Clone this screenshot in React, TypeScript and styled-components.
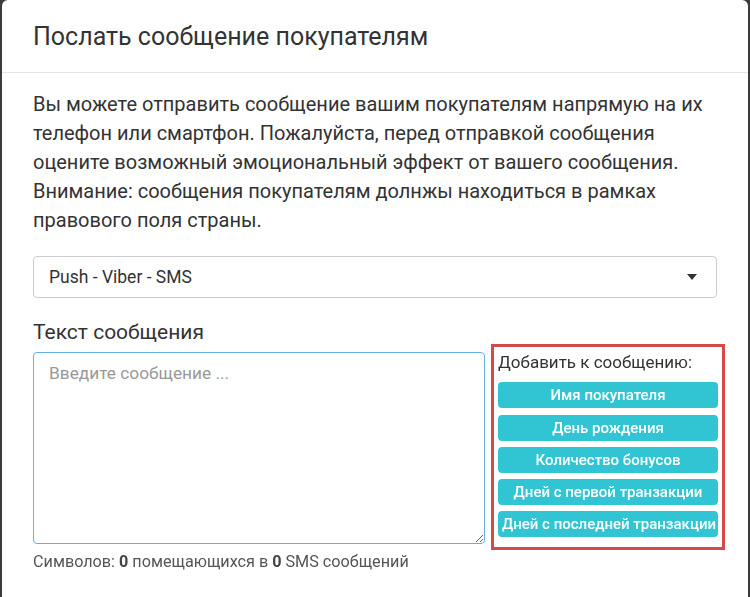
import { createGlobalStyle, styled } from "styled-components"

const Global = createGlobalStyle`
  html, body {
    margin: 0;
    padding: 0;
    background: #3b3b3b;
    font-family: Roboto, "Liberation Sans", sans-serif;
    color: #333;
  }
  * { box-sizing: border-box; }
`

const Backdrop = styled.div`
  padding: 0 2px;
  height: 597px;
  overflow: hidden;
`

const Modal = styled.div`
  background: #fff;
  border-radius: 6px 6px 0 0;
  min-height: 620px;
`

const Header = styled.div`
  padding: 21px 31px 20px;
  border-bottom: 1px solid #e5e5e5;
`

const Title = styled.h4`
  margin: 0;
  font-size: 25px;
  font-weight: 400;
  line-height: 31px;
  color: #333;
`

const Body = styled.div`
  padding: 17px 31px;
`

const Intro = styled.p`
  margin: 0 0 21px;
  font-size: 20px;
  line-height: 29px;
  color: #333;
`

const SelectBox = styled.div`
  height: 42px;
  border: 1px solid #ccc;
  border-radius: 4px;
  display: flex;
  align-items: center;
  padding: 0 15px;
  font-size: 17.5px;
  color: #333;
`

const Caret = styled.span`
  margin-left: auto;
  width: 0;
  height: 0;
  border-left: 5px solid transparent;
  border-right: 5px solid transparent;
  border-top: 6px solid #333;
  margin-right: 4px;
`

const Row = styled.div`
  display: flex;
  gap: 6px;
  margin-top: 20px;
  align-items: flex-start;
`

const LeftCol = styled.div`
  width: 452px;
  flex-shrink: 0;
  display: flex;
  flex-direction: column;
`

const Label = styled.label`
  font-size: 21px;
  line-height: 28px;
  margin-bottom: 6px;
`

const Area = styled.textarea`
  height: 192px;
  border: 1px solid #66afe9;
  border-radius: 4px;
  padding: 10px 15px;
  font-family: inherit;
  font-size: 17.3px;
  color: #333;
  outline: none;
  resize: vertical;
  &::placeholder { color: #999; }
`

const Counter = styled.div`
  margin-top: 8px;
  font-size: 16.2px;
  line-height: 20px;
  color: #555;
  b { color: #444; }
`

const Inserts = styled.div`
  flex-shrink: 0;
  margin-top: 26px;
  width: 234px;
  border: 3px solid #d44a47;
  padding: 4px 4px 10px;
  display: flex;
  flex-direction: column;
  gap: 6.3px;
`

const InsertsTitle = styled.div`
  font-size: 17px;
  line-height: 22px;
  margin-bottom: 3px;
`

const InsertButton = styled.button`
  height: 26px;
  width: 220px;
  border: none;
  border-radius: 4px;
  background: #31c5d3;
  color: #fff;
  font-family: inherit;
  font-size: 15px;
  font-weight: 500;
  padding: 0 4px;
  white-space: nowrap;
  overflow: hidden;
  cursor: pointer;
`

const buttons = [
  "Имя покупателя",
  "День рождения",
  "Количество бонусов",
  "Дней с первой транзакции",
  "Дней с последней транзакции",
]

export default function App() {
  return (
    <Backdrop>
      <Global />
      <Modal>
        <Header>
          <Title>Послать сообщение покупателям</Title>
        </Header>
        <Body>
          <Intro>
            Вы можете отправить сообщение вашим покупателям напрямую на их
            телефон или смартфон. Пожалуйста, перед отправкой сообщения
            оцените возможный эмоциональный эффект от вашего сообщения.
            Внимание: сообщения покупателям долнжы находиться в рамках
            правового поля страны.
          </Intro>
          <SelectBox>
            Push - Viber - SMS
            <Caret />
          </SelectBox>
          <Row>
            <LeftCol>
              <Label>Текст сообщения</Label>
              <Area placeholder="Введите сообщение ..." autoFocus />
              <Counter>
                Символов: <b>0</b> помещающихся в <b>0</b> SMS сообщений
              </Counter>
            </LeftCol>
            <Inserts>
              <InsertsTitle>Добавить к сообщению:</InsertsTitle>
              {buttons.map((b) => (
                <InsertButton key={b}>{b}</InsertButton>
              ))}
            </Inserts>
          </Row>
        </Body>
      </Modal>
    </Backdrop>
  )
}
